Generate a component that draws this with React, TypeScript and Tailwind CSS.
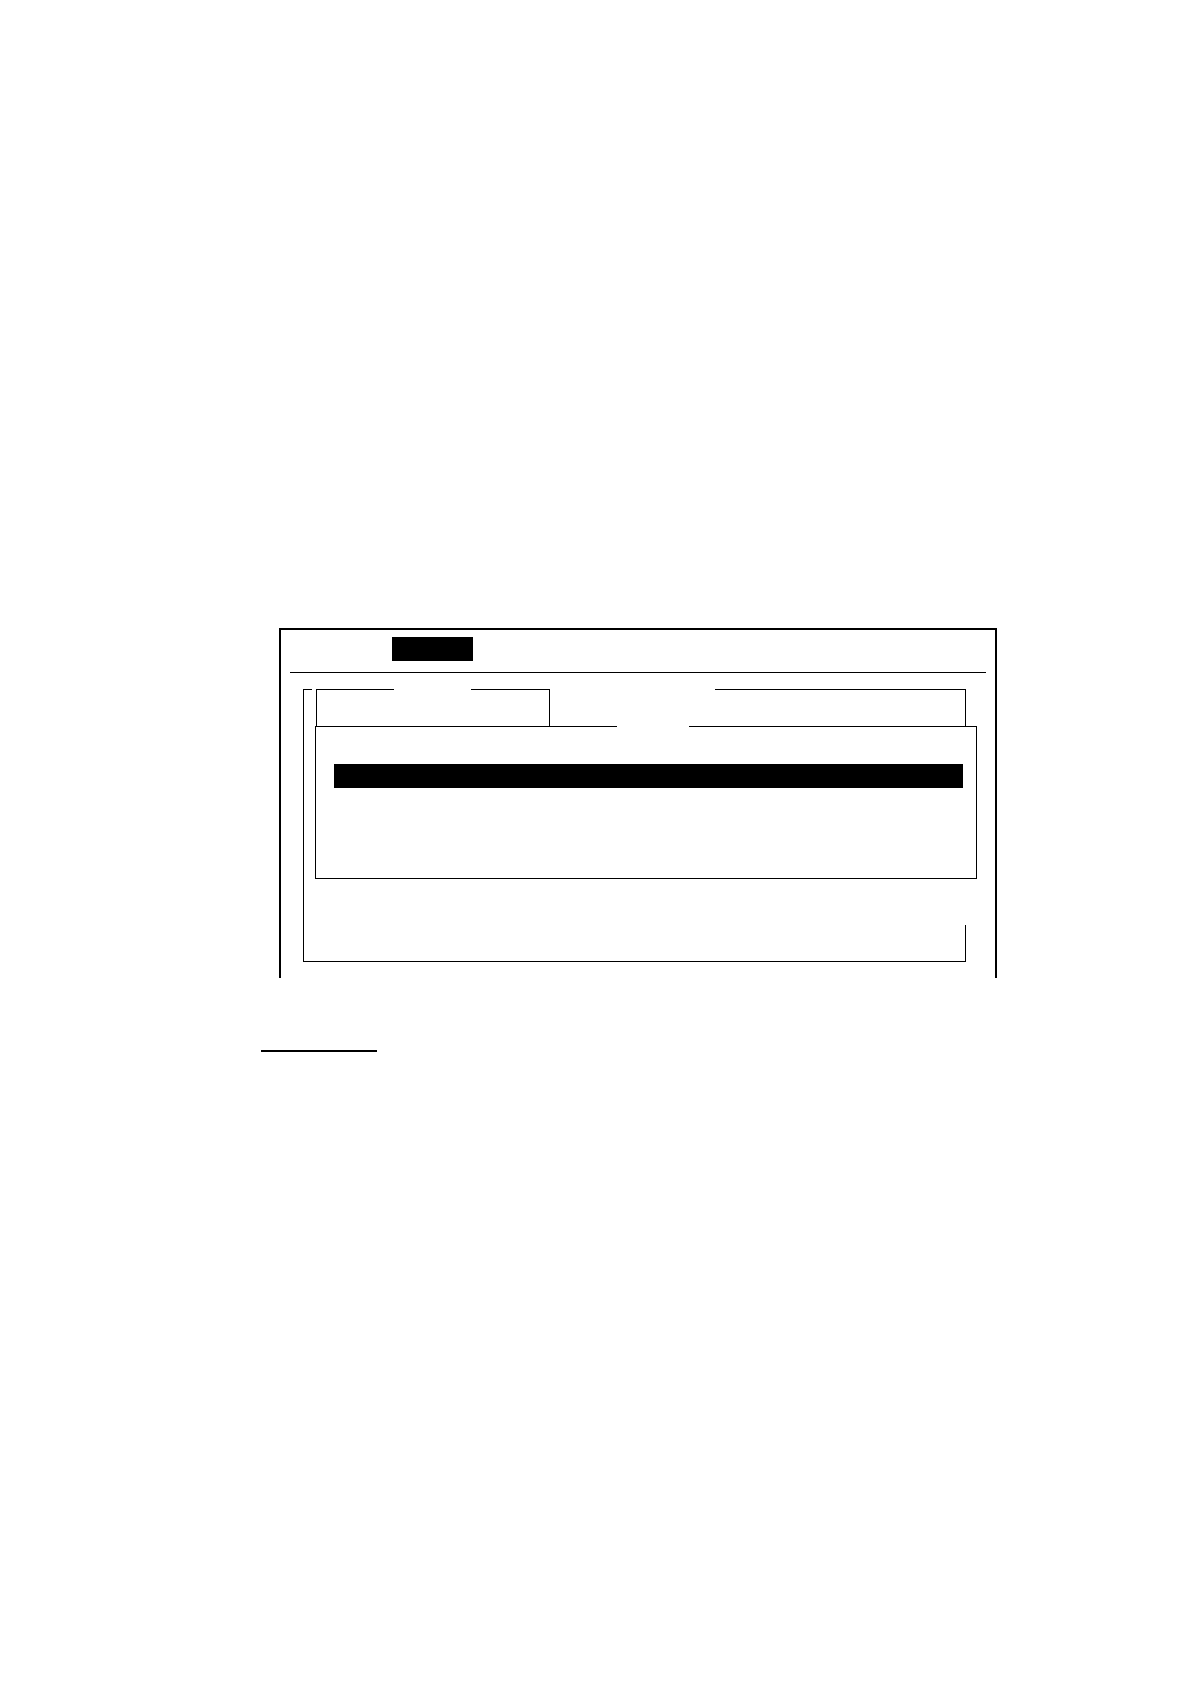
const Tab = () => (
  <div className="ml-[4px] flex h-[37px] w-[234px] border-l border-r border-black">
    <div className="h-px w-[77px] bg-black" />
    <div className="flex-1" />
    <div className="h-px w-[78px] bg-black" />
  </div>
)

const Panel = () => (
  <div className="ml-[11px] flex h-[153px] w-[662px] flex-col border-l border-r border-b border-black">
    <div className="flex">
      <div className="h-px w-[301px] bg-black" />
      <div className="w-[72px]" />
      <div className="h-px flex-1 bg-black" />
    </div>
    <div className="ml-[18px] mt-[37px] h-[24px] w-[629px] bg-black" />
  </div>
)

export default function App() {
  return (
    <div className="min-h-[1684px] w-[1190px] bg-white pt-[628px]">
      <div className="ml-[279px] flex h-[350px] w-[718px] flex-col border-l-2 border-r-2 border-t-2 border-black">
        <div className="ml-[111px] mt-[7px] h-[24px] w-[81px] bg-black" />
        <div className="ml-[9px] mt-[11px] h-px w-[696px] bg-black" />

        <div className="ml-[22px] mt-[16px] flex h-[273px] w-[663px] flex-col border-l border-b border-black">
          <div className="flex">
            <div className="h-px w-[8px] bg-black" />
            <Tab />
            <div className="ml-[165px] h-[37px] w-[251px] border-t border-r border-black" />
          </div>
          <Panel />
          <div className="mt-auto h-[36px] w-px self-end bg-black" />
        </div>
      </div>

      <div className="ml-[261px] mt-[72px] h-[2px] w-[116px] bg-black" />
    </div>
  )
}
